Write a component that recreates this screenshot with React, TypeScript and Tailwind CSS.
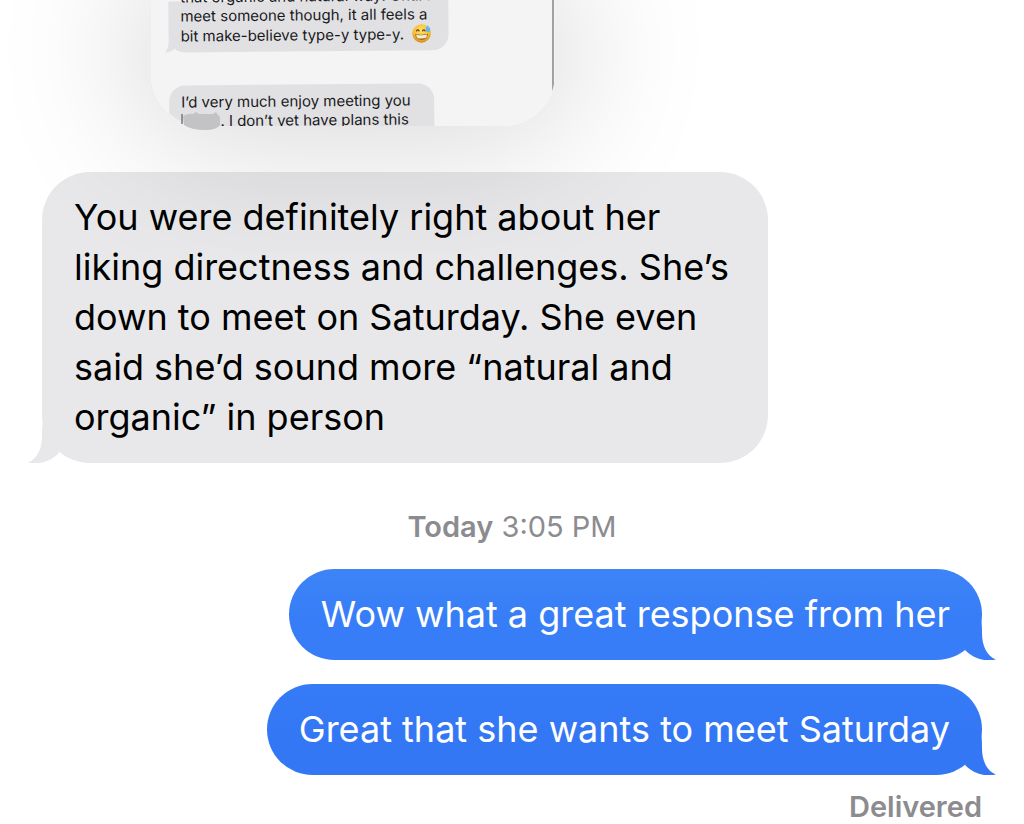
import type { ReactNode } from "react";

function Tail({ side, className }: { side: "left" | "right"; className: string }) {
  return (
    <svg
      aria-hidden="true"
      viewBox="0 0 40 40"
      className={
        side === "left"
          ? `absolute bottom-0 -left-3.5 size-10 -scale-x-100 ${className}`
          : `absolute bottom-0 -right-3.5 size-10 ${className}`
      }
    >
      <path d="M20 0H25.200C26 4 26 9 26 13C26 26 31 36 40 39.5C27 42 17 38 9 30Z" />
    </svg>
  );
}

function SweatSmile() {
  return (
    <svg role="img" aria-label="grinning face with sweat" viewBox="0 0 40 40" className="ml-2 inline-block size-5 align-text-bottom">
      <defs>
        <radialGradient id="face" cx="50%" cy="35%" r="65%">
          <stop offset="0" stopColor="#ffe36b" />
          <stop offset="0.65" stopColor="#f8bd32" />
          <stop offset="1" stopColor="#d98616" />
        </radialGradient>
      </defs>
      <circle cx="20" cy="20" r="18.5" fill="url(#face)" />
      <path d="M10 15q2.500-4 5 0M22 15q2.500-4 5 0" fill="none" stroke="#6b431b" strokeWidth="2.6" strokeLinecap="round" />
      <path d="M7 21q13 3 26 0q-1 12-13 12T7 21Z" fill="#9a6a2a" />
      <path d="M9 22.5q11 2.5 22 0q-.5 6-3 7q-8 1.500-16 0q-2.500-2-3-7Z" fill="#f3ecd0" />
      <path d="M32 4q7 7 5 11q-2 4-7 2q-5-3 2-13Z" fill="#65b9e8" />
    </svg>
  );
}

function Sent({ children, tone, tail }: { children: ReactNode; tone: string; tail: string }) {
  return (
    <div className={`relative w-fit rounded-[46px] px-8 py-5 text-[36px] leading-[51px] text-white ${tone}`}>
      <p>{children}</p>
      <Tail side="right" className={tail} />
    </div>
  );
}

function Attachment() {
  return (
    <figure className="relative z-10 ml-[151px] h-[126px] w-[404px] rounded-b-[52px] shadow-[0_-4px_140px_16px_rgba(0,0,0,0.17)]">
      <div className="h-full overflow-hidden rounded-b-[52px] bg-[#f4f4f5] pr-px text-[15px] leading-[19px] text-[#18181a]">
        <div className="h-full border-r-2 border-[#a0a2a2]">
          <div className="-rotate-[0.5deg] pl-[18px]">
            <div className="relative flex h-[51px] w-[280px] flex-col justify-end rounded-b-2xl bg-[#e1e1e4] px-3 pb-2">
              <p className="whitespace-nowrap">that organic and natural way! Until I</p>
              <p className="whitespace-nowrap">meet someone though, it all feels a</p>
              <p className="h-[19px] whitespace-nowrap">
                bit make-believe type-y type-y.
                <SweatSmile />
              </p>
              <svg aria-hidden="true" viewBox="0 0 12 12" className="absolute bottom-0 -left-1 size-3 fill-[#e1e1e4]">
                <path d="M4 0Q4 9 0 12Q6 12 9 9L12 0Z" />
              </svg>
            </div>
            <div className="mt-[33px] h-20 w-[265px] rounded-2xl bg-[#e1e1e4] px-3 pt-[7px]">
              <p className="whitespace-nowrap">I’d very much enjoy meeting you</p>
              <p className="pl-[39px] whitespace-nowrap">. I don’t yet have plans this</p>
            </div>
          </div>
        </div>
      </div>
      <svg role="img" aria-label="hidden name" viewBox="0 0 40 20" className="absolute top-[111px] left-[30px] h-5 w-10">
        <path d="M1 3V13" stroke="#77777a" strokeWidth="1.500" />
        <path d="M2 5Q8 2 12 3L15 1L18 3H32L35 1L37 4L39 6V14Q36 19 24 19Q10 19 3 14Z" fill="#c3c3c5" />
      </svg>
    </figure>
  );
}

export default function App() {
  return (
    <main className="min-h-screen overflow-hidden bg-white font-['Inter','Liberation_Sans',sans-serif]">
      <Attachment />
      <section className="mt-[46px] pr-[42px] pl-[42px]">
        <div className="relative w-full max-w-[726px] rounded-[48px] bg-[#e8e8ea] pt-5 pr-6 pb-[21px] pl-8 text-[36px] leading-[50px] text-black">
          <p>
            You were definitely right about her liking directness and challenges. She’s down to meet on Saturday. She
            even said she’d sound more “natural and organic” in person
          </p>
          <Tail side="left" className="fill-[#e8e8ea]" />
        </div>
        <p className="mt-12 text-center text-[29px] leading-8 text-[#8b8b90]">
          <time>
            <span className="font-semibold">Today</span> 3:05 PM
          </time>
        </p>
        <div className="mt-[26px] flex flex-col items-end gap-6">
          <Sent tone="bg-linear-to-b from-[#3d84f7] to-[#377df7] to-55%" tail="fill-[#377df7]">
            Wow what a great response from her
          </Sent>
          <Sent tone="bg-linear-to-b from-[#367bf6] to-[#3377f5] to-55%" tail="fill-[#3377f5]">
            Great that she wants to meet Saturday
          </Sent>
        </div>
        <p className="mt-4 text-right text-[29px] leading-8 font-semibold text-[#8b8b90]">Delivered</p>
      </section>
    </main>
  );
}
